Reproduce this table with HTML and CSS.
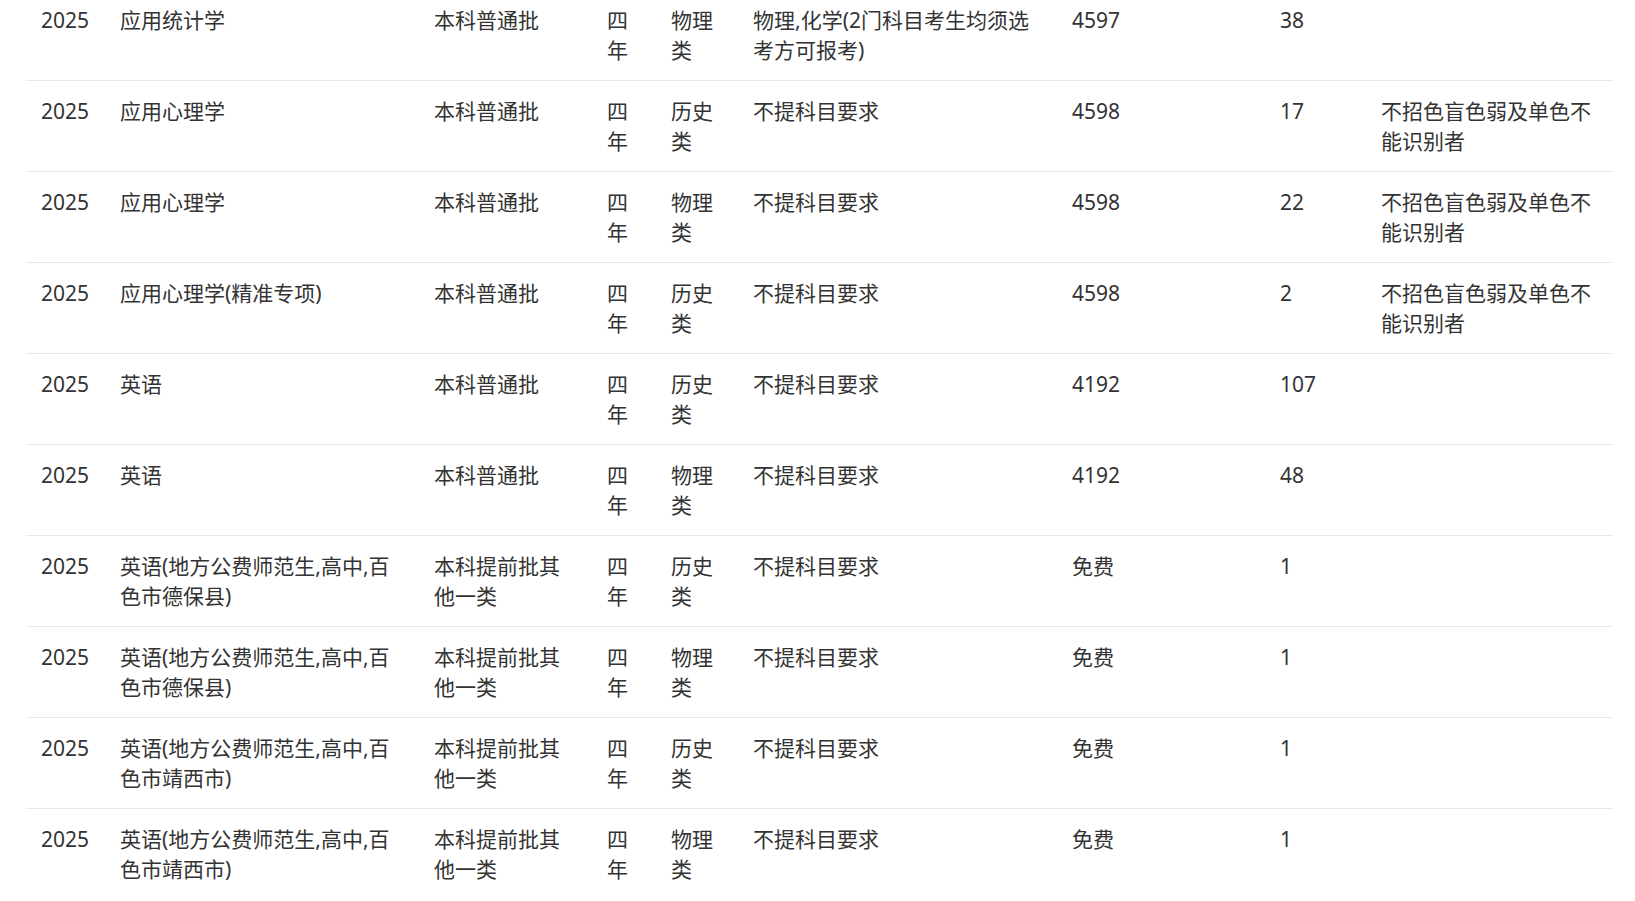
FILE: index.html
```html
<!DOCTYPE html>
<html lang="zh-CN">
<head>
<meta charset="utf-8">
<title>招生计划</title>
<link rel="stylesheet" href="styles.css">
</head>
<body>
<div class="wrap">
<table class="plan">
<colgroup>
<col class="c-year"><col class="c-major"><col class="c-batch"><col class="c-len"><col class="c-type"><col class="c-subj"><col class="c-code"><col class="c-num"><col class="c-note">
</colgroup>
<tbody>
<tr><td>2025</td><td>应用统计学</td><td>本科普通批</td><td>四年</td><td>物理类</td><td>物理,化学(2门科目考生均须选考方可报考)</td><td>4597</td><td>38</td><td></td></tr>
<tr><td>2025</td><td>应用心理学</td><td>本科普通批</td><td>四年</td><td>历史类</td><td>不提科目要求</td><td>4598</td><td>17</td><td>不招色盲色弱及单色不能识别者</td></tr>
<tr><td>2025</td><td>应用心理学</td><td>本科普通批</td><td>四年</td><td>物理类</td><td>不提科目要求</td><td>4598</td><td>22</td><td>不招色盲色弱及单色不能识别者</td></tr>
<tr><td>2025</td><td>应用心理学(精准专项)</td><td>本科普通批</td><td>四年</td><td>历史类</td><td>不提科目要求</td><td>4598</td><td>2</td><td>不招色盲色弱及单色不能识别者</td></tr>
<tr><td>2025</td><td>英语</td><td>本科普通批</td><td>四年</td><td>历史类</td><td>不提科目要求</td><td>4192</td><td>107</td><td></td></tr>
<tr><td>2025</td><td>英语</td><td>本科普通批</td><td>四年</td><td>物理类</td><td>不提科目要求</td><td>4192</td><td>48</td><td></td></tr>
<tr><td>2025</td><td>英语(地方公费师范生,高中,百色市德保县)</td><td>本科提前批其他一类</td><td>四年</td><td>历史类</td><td>不提科目要求</td><td>免费</td><td>1</td><td></td></tr>
<tr><td>2025</td><td>英语(地方公费师范生,高中,百色市德保县)</td><td>本科提前批其他一类</td><td>四年</td><td>物理类</td><td>不提科目要求</td><td>免费</td><td>1</td><td></td></tr>
<tr><td>2025</td><td>英语(地方公费师范生,高中,百色市靖西市)</td><td>本科提前批其他一类</td><td>四年</td><td>历史类</td><td>不提科目要求</td><td>免费</td><td>1</td><td></td></tr>
<tr><td>2025</td><td>英语(地方公费师范生,高中,百色市靖西市)</td><td>本科提前批其他一类</td><td>四年</td><td>物理类</td><td>不提科目要求</td><td>免费</td><td>1</td><td></td></tr>
</tbody>
</table>
</div>
</body>
</html>
```
FILE: styles.css
```css
html, body {
  margin: 0;
  padding: 0;
  background: #fff;
  overflow: hidden;
}
body {
  font-family: "Noto Sans", "Noto Sans CJK SC", sans-serif;
  font-size: 21px;
  line-height: 30px;
  color: #333;
}
.wrap {
  margin: -11px 0 0 26px;
  width: 1587px;
}
.plan {
  width: 1587px;
  table-layout: fixed;
  border-collapse: collapse;
}
.plan td {
  padding: 15px;
  vertical-align: top;
  border-top: 1px solid #e8e8e8;
  word-break: break-all;
}
.c-year { width: 79px; }
.c-major { width: 314px; }
.c-batch { width: 173px; }
.c-len { width: 64px; }
.c-type { width: 82px; }
.c-subj { width: 319px; }
.c-code { width: 208px; }
.c-num { width: 101px; }
.c-note { width: 247px; }
```
